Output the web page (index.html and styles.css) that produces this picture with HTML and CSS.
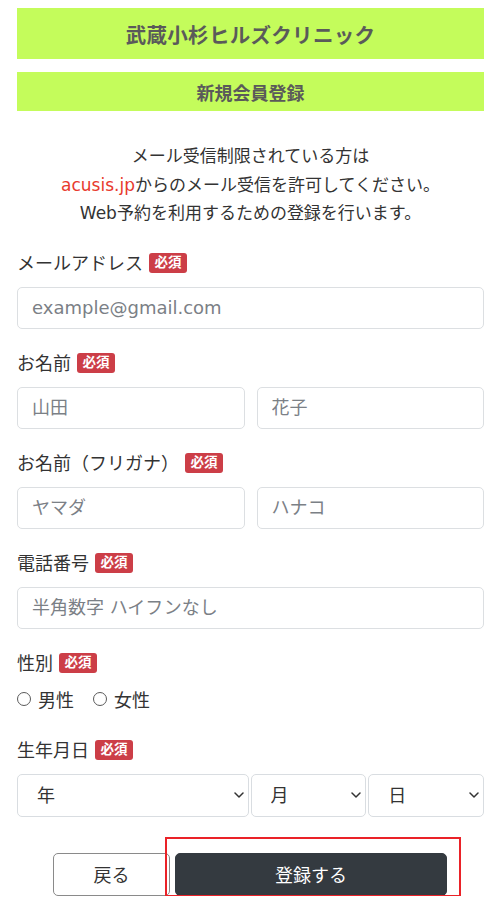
FILE: index.html
```html
<!DOCTYPE html>
<html lang="ja">
<head>
<meta charset="utf-8">
<title>新規会員登録</title>
<link rel="stylesheet" href="styles.css">
</head>
<body>
<div class="page">
  <header class="banner banner-title">武蔵小杉ヒルズクリニック</header>
  <h1 class="banner banner-sub">新規会員登録</h1>

  <p class="notice">
    メール受信制限されている方は<br>
    <span class="domain">acusis.jp</span>からのメール受信を許可してください。<br>
    Web予約を利用するための登録を行います。
  </p>

  <form class="form">
    <div class="group">
      <label class="label">メールアドレス<span class="badge">必須</span></label>
      <input class="control" type="email" placeholder="example@gmail.com">
    </div>

    <div class="group">
      <label class="label">お名前<span class="badge">必須</span></label>
      <div class="pair">
        <input class="control" type="text" placeholder="山田">
        <input class="control" type="text" placeholder="花子">
      </div>
    </div>

    <div class="group">
      <label class="label">お名前（フリガナ）<span class="badge">必須</span></label>
      <div class="pair">
        <input class="control" type="text" placeholder="ヤマダ">
        <input class="control" type="text" placeholder="ハナコ">
      </div>
    </div>

    <div class="group">
      <label class="label">電話番号<span class="badge">必須</span></label>
      <input class="control" type="tel" placeholder="半角数字 ハイフンなし">
    </div>

    <div class="group group-radio">
      <label class="label">性別<span class="badge">必須</span></label>
      <div class="radios">
        <label class="radio"><input type="radio" name="sex">男性</label>
        <label class="radio"><input type="radio" name="sex">女性</label>
      </div>
    </div>

    <div class="group">
      <label class="label">生年月日<span class="badge">必須</span></label>
      <div class="dates">
        <select class="select"><option>年</option></select>
        <select class="select"><option>月</option></select>
        <select class="select"><option>日</option></select>
      </div>
    </div>

    <div class="actions">
      <button type="button" class="btn btn-back">戻る</button>
      <div class="submit-wrap">
        <button type="submit" class="btn btn-submit">登録する</button>
        <span class="highlight"></span>
      </div>
    </div>
  </form>
</div>
</body>
</html>
```

FILE: styles.css
```css
html, body {
  margin: 0;
  padding: 0;
  overflow: hidden;
  background: #fff;
}

body {
  font-family: "Open Sans", "Noto Sans CJK JP", sans-serif;
  color: #333;
}

.page {
  padding: 8px 16px 0 17px;
}

.banner {
  display: flex;
  align-items: center;
  justify-content: center;
  background: #c4fc5b;
  color: #5a5a5a;
  font-weight: bold;
  margin: 0;
}

.banner-title {
  height: 51px;
  font-size: 20.5px;
  letter-spacing: 0.3px;
  margin-bottom: 13px;
}

.banner-sub {
  height: 39px;
  font-size: 18px;
}

.notice {
  margin: 31px 0 0;
  text-align: center;
  font-family: "DejaVu Sans", "Noto Sans CJK JP", sans-serif;
  font-size: 17px;
  line-height: 28.5px;
  color: #333;
}

.domain {
  color: #e83a2e;
}

.form {
  margin-top: 23px;
}

.group {
  margin-bottom: 22px;
}

.group-radio {
  margin-bottom: 27px;
}

.label {
  display: flex;
  align-items: center;
  gap: 6px;
  height: 24px;
  font-size: 18px;
  line-height: 24px;
  margin-bottom: 12px;
  color: #333;
}

.badge {
  display: inline-flex;
  align-items: center;
  justify-content: center;
  height: 20px;
  padding: 0 5.5px;
  border-radius: 3px;
  background: #cc3e47;
  color: #fff;
  font-size: 13.5px;
  font-weight: bold;
  line-height: 1;
}

.control {
  display: block;
  width: 100%;
  box-sizing: border-box;
  height: 42px;
  padding: 0 14px;
  border: 1px solid #dcdfe2;
  border-radius: 5px;
  background: #fff;
  font-family: "DejaVu Sans", "Noto Sans CJK JP", sans-serif;
  font-size: 18px;
  color: #333;
  outline: none;
}

.control::placeholder {
  color: #7b8086;
  opacity: 1;
}

.pair {
  display: grid;
  grid-template-columns: 1fr 1fr;
  gap: 12px;
}

.radios {
  display: flex;
  align-items: center;
  gap: 19px;
  height: 24px;
  font-size: 18px;
}

.radio {
  display: flex;
  align-items: center;
  gap: 7px;
  color: #333;
}

.radio input {
  appearance: none;
  -webkit-appearance: none;
  margin: 0;
  width: 14px;
  height: 14px;
  border: 1.5px solid #5a5a5a;
  border-radius: 50%;
  background: #fff;
  box-sizing: border-box;
}

.dates {
  display: grid;
  grid-template-columns: 2fr 1fr 1fr;
  gap: 2px;
}

.select {
  appearance: none;
  -webkit-appearance: none;
  height: 43px;
  width: 100%;
  box-sizing: border-box;
  padding: 0 18px 0 19px;
  border: 1px solid #d9dde1;
  border-radius: 5px;
  background-color: #fff;
  background-image: url("data:image/svg+xml;utf8,<svg xmlns='http://www.w3.org/2000/svg' width='10' height='6' viewBox='0 0 10 6'><path d='M1 1l4 4 4-4' fill='none' stroke='%23333' stroke-width='1.5' stroke-linecap='round' stroke-linejoin='round'/></svg>");
  background-repeat: no-repeat;
  background-position: right 4px center;
  font-family: "Open Sans", "Noto Sans CJK JP", sans-serif;
  font-size: 18px;
  color: #333;
  outline: none;
}

.actions {
  display: flex;
  justify-content: center;
  gap: 5px;
  margin-top: 36px;
  margin-left: -17px;
  margin-right: -16px;
}

.btn {
  height: 43px;
  border-radius: 5px;
  font-family: "Open Sans", "Noto Sans CJK JP", sans-serif;
  font-size: 18px;
  cursor: pointer;
}

.btn-back {
  width: 117px;
  border: 1px solid #8a8a8a;
  background: #fff;
  color: #333;
}

.submit-wrap {
  position: relative;
  display: flex;
}

.btn-submit {
  width: 272px;
  border: 1px solid #343a40;
  background: #343a40;
  color: #fff;
}

.highlight {
  position: absolute;
  top: -16px;
  left: -10px;
  right: -14px;
  bottom: -1px;
  border: 2.5px solid #ea2228;
  pointer-events: none;
}
```
